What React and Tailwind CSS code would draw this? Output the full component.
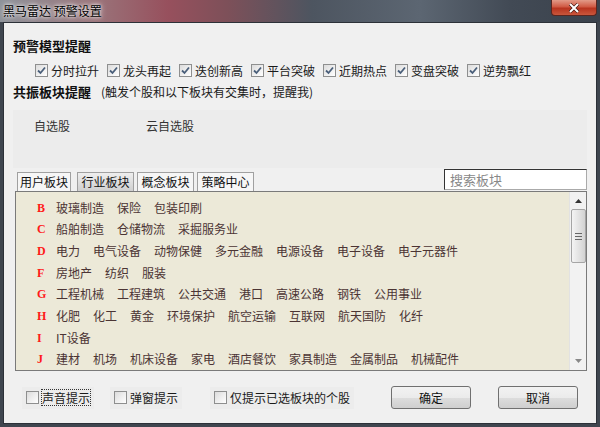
import React from 'react'

const font = { fontFamily: '"Noto Sans CJK SC", "Noto Sans", sans-serif' }

const models = ['分时拉升', '龙头再起', '迭创新高', '平台突破', '近期热点', '变盘突破', '逆势飘红']

const sectors = [
  ['B', ['玻璃制造', '保险', '包装印刷']],
  ['C', ['船舶制造', '仓储物流', '采掘服务业']],
  ['D', ['电力', '电气设备', '动物保健', '多元金融', '电源设备', '电子设备', '电子元器件']],
  ['F', ['房地产', '纺织', '服装']],
  ['G', ['工程机械', '工程建筑', '公共交通', '港口', '高速公路', '钢铁', '公用事业']],
  ['H', ['化肥', '化工', '黄金', '环境保护', '航空运输', '互联网', '航天国防', '化纤']],
  ['I', ['IT设备']],
  ['J', ['建材', '机场', '机床设备', '家电', '酒店餐饮', '家具制造', '金属制品', '机械配件']],
]

function Box({ checked }) {
  return (
    <span className="w-[13px] h-[13px] shrink-0 border border-[#8e8f8f] bg-[linear-gradient(135deg,#dcdcdc,#ffffff)] flex items-center justify-center">
      {checked && (
        <svg width="9" height="9" viewBox="0 0 9 9">
          <path d="M1 4.5 L3.5 7 L8 1.5" fill="none" stroke="#4a5f7a" strokeWidth="1.8" />
        </svg>
      )}
    </span>
  )
}

function Check({ label, checked, focus }) {
  return (
    <label className="flex items-center gap-[3px] h-[16px] text-[12px] text-[#1a1a1a]">
      <Box checked={checked} />
      <span className={focus ? 'outline outline-1 outline-dotted outline-[#333] leading-[15px]' : 'leading-[15px]'}>{label}</span>
    </label>
  )
}

const tab = 'h-[19px] border border-b-0 border-[#a0a0a0] text-center text-[12px] leading-[18px] text-[#111]'

export default function App() {
  return (
    <div className="w-[600px] h-[427px] overflow-hidden bg-[#3f464f] flex flex-col" style={font}>
      <div className="h-[22px] shrink-0 flex items-start justify-between bg-[linear-gradient(90deg,#8e939a_0%,#9a767c_15%,#97505d_28%,#7d5059_38%,#4d5560_52%,#5c6672_70%,#424a55_85%,#3a424c_100%)]">
        <span className="pl-[3px] pt-[2px] text-[12px] leading-[18px] text-black [text-shadow:0_0_6px_#ffffff,0_0_3px_#ffffff]">黑马雷达 预警设置</span>
        <div className="w-[46px] h-[16px] mr-[3px] rounded-b-[4px] border border-t-0 border-[#5a2620] bg-[linear-gradient(180deg,#e29a88_0%,#d05a44_45%,#b8341f_55%,#c9573c_100%)] flex items-center justify-center">
          <svg width="12" height="10" viewBox="0 0 12 10">
            <path d="M2 1 L10 9 M10 1 L2 9" stroke="#3a1510" strokeWidth="3.2" />
            <path d="M2 1 L10 9 M10 1 L2 9" stroke="#ffffff" strokeWidth="2" />
          </svg>
        </div>
      </div>

      <div className="mx-[3px] mb-[3px] flex-1 border border-[#2c3138] bg-[#f0f0f0] flex flex-col">
        <div className="mt-[15px] ml-[9px] text-[13px] font-bold leading-[16px] text-[#111]">预警模型提醒</div>
        <div className="mt-[8px] ml-[31px] flex gap-[8px]">
          {models.map((m) => (
            <Check key={m} label={m} checked />
          ))}
        </div>
        <div className="mt-[6px] ml-[9px] flex items-center leading-[16px]">
          <span className="text-[13px] font-bold text-[#111]">共振板块提醒</span>
          <span className="ml-[10px] text-[12px] text-[#1a1a1a]">(触发个股和以下板块有交集时，提醒我)</span>
        </div>

        <div className="mt-[10px] mx-[9px] h-[58px] bg-[#ececec] flex pt-[8px] pl-[21px] text-[12px] leading-[16px] text-[#333]">
          <span className="w-[112px]">自选股</span>
          <span>云自选股</span>
        </div>

        <div className="mt-[2px] ml-[11px] mr-[9px] flex items-end justify-between h-[21px]">
          <div className="flex items-end ml-[2px]">
            <div className={tab + ' w-[54px] bg-[#f6f6f6]'}>用户板块</div>
            <div className={tab + ' ml-[6px] w-[57px] bg-[linear-gradient(180deg,#eeeeee,#cfcfcf)]'}>行业板块</div>
            <div className={tab + ' ml-[3px] w-[57px] bg-[#f6f6f6]'}>概念板块</div>
            <div className={tab + ' ml-[3px] w-[57px] bg-[#f6f6f6]'}>策略中心</div>
          </div>
          <div className="w-[143px] h-[21px] mb-[1px] border border-[#333] border-r-[#aaa] border-b-[#aaa] bg-white px-[5px] text-[13px] leading-[19px] text-[#888]">搜索板块</div>
        </div>

        <div className="ml-[11px] mr-[9px] h-[180px] border border-[#7a7a7a] bg-[#ece9d8] flex">
          <div className="flex-1 flex flex-col pt-[5px]">
            {sectors.map(([letter, items]) => (
              <div key={letter} className="h-[22px] flex items-center">
                <span className="w-[40px] pl-[21px] text-[12px] font-bold text-[#ff1a1a]" style={{ fontFamily: '"Liberation Serif", serif' }}>{letter}</span>
                <div className="flex gap-[13px] text-[12px] text-[#4b3434]">
                  {items.map((it) => (
                    <span key={it}>{it}</span>
                  ))}
                </div>
              </div>
            ))}
          </div>
          <div className="w-[17px] bg-[#f2f2f2] border-l border-[#e2e2e2] flex flex-col items-center">
            <svg className="mt-[7px]" width="7" height="4" viewBox="0 0 7 4"><path d="M0 4 L3.5 0 L7 4 Z" fill="#333" /></svg>
            <div className="mt-[6px] w-[15px] h-[54px] rounded-[2px] border border-[#a5a5a5] bg-[linear-gradient(90deg,#f4f4f4,#e0e0e0_60%,#d2d2d2)] flex flex-col items-center justify-center gap-[2px]">
              <span className="w-[7px] h-px bg-[#666]" />
              <span className="w-[7px] h-px bg-[#666]" />
              <span className="w-[7px] h-px bg-[#666]" />
            </div>
            <div className="flex-1" />
            <svg className="mb-[7px]" width="7" height="4" viewBox="0 0 7 4"><path d="M0 0 L3.5 4 L7 0 Z" fill="#888" /></svg>
          </div>
        </div>

        <div className="mt-[15px] ml-[18px] mr-[18px] flex items-center">
          <div className="flex items-center h-[22px] px-[4px] bg-[#ececec]">
            <Check label="声音提示" focus />
          </div>
          <div className="ml-[16px] flex items-center h-[22px] px-[4px] bg-[#ececec]">
            <Check label="弹窗提示" />
          </div>
          <div className="ml-[28px] flex items-center h-[22px] px-[4px] bg-[#ececec]">
            <Check label="仅提示已选板块的个股" />
          </div>
          <div className="flex-1" />
          <button className="w-[80px] h-[23px] rounded-[3px] border border-[#707070] bg-[linear-gradient(180deg,#f2f2f2_0%,#ebebeb_50%,#dddddd_51%,#cfcfcf_100%)] text-[12px] text-[#111]">确定</button>
          <button className="ml-[27px] w-[80px] h-[23px] rounded-[3px] border border-[#707070] bg-[linear-gradient(180deg,#f2f2f2_0%,#ebebeb_50%,#dddddd_51%,#cfcfcf_100%)] text-[12px] text-[#111]">取消</button>
        </div>
      </div>
    </div>
  )
}
